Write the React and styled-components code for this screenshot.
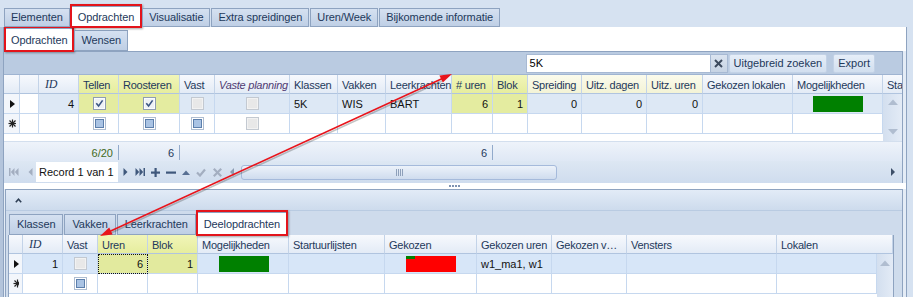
import React from 'react';
import styled, { createGlobalStyle, css } from 'styled-components';

const GlobalStyle = createGlobalStyle`
  html, body { margin: 0; padding: 0; background: #d6e2f1; }
  body { font-family: "Liberation Sans", Arial, sans-serif; font-size: 11px; }
  * { box-sizing: border-box; }
`;

const Y = '#e4eca0';
const LOW_Y = '#e2ea9e';

const headBg = {
  n: 'linear-gradient(#f7f9fd, #e3ebf6)',
  y: 'linear-gradient(#f1f5b8, #e6ed9e)',
  p: 'linear-gradient(#fbfbec, #f3f3d6)',
};

const Frame = styled.div`
  position: relative;
  width: 913px;
  height: 297px;
  overflow: hidden;
  background: #d6e2f1;
  display: flex;
  flex-direction: column;
  color: #1e395b;
`;

const TabStrip = styled.div`
  display: flex;
  align-items: flex-end;
  flex-shrink: 0;
  height: ${(p) => p.$h}px;
  padding-left: ${(p) => p.$pl}px;
  background: ${(p) => p.$bg};
  position: relative;
  z-index: 3;
  margin-bottom: -1px;
`;

const Tab = styled.div`
  position: relative;
  height: ${(p) => (p.$active ? p.$h + 2 : p.$h)}px;
  padding: 0 ${(p) => p.$px}px 1px;
  margin-right: 1px;
  display: flex;
  align-items: center;
  border: 1px solid #8ea3c0;
  border-bottom: ${(p) => (p.$active ? 'none' : '1px solid #8ea3c0')};
  background: ${(p) => (p.$active ? '#fff' : 'linear-gradient(#d5e1f1, #bfcfe5)')};
  color: #1e395b;
  white-space: nowrap;
  letter-spacing: -0.1px;
  ${(p) =>
    p.$marked &&
    css`
      &::after {
        content: '';
        position: absolute;
        top: -3px;
        left: -2px;
        right: -2px;
        bottom: -1px;
        border: 2px solid #e3141b;
        box-shadow: 1px 1px 2px rgba(0, 0, 0, 0.35);
        pointer-events: none;
      }
    `}
`;

const TabBody = styled.div`
  flex: 1;
  min-height: 0;
  margin: 0 6px 0 3px;
  border: 1px solid #8ea3c0;
  border-bottom: none;
  background: #e4ecf6;
  display: flex;
  flex-direction: column;
  box-shadow: -3px 0 0 #b3c4db;
`;

const SubTabStrip = styled(TabStrip)`
  margin-bottom: 0;
  z-index: 2;
`;

const GridPanel = styled.div`
  margin-right: 3px;
  border-top: 1px solid #8ea3c0;
  border-right: 1px solid #8ea3c0;
  display: flex;
  flex-direction: column;
  background: #fff;
  flex-shrink: 0;
`;

const Toolbar = styled.div`
  height: 23px;
  background: #bacbe1;
  border-bottom: 1px solid #9fb4d1;
  display: flex;
  align-items: center;
  justify-content: flex-end;
  padding-right: 27px;
`;

const SearchInput = styled.div`
  width: 185px;
  height: 19px;
  background: #fff;
  border: 1px solid #a7b9d3;
  color: #000;
  display: flex;
  align-items: center;
  padding-left: 3px;
`;

const ClearButton = styled.div`
  width: 17px;
  height: 19px;
  background: linear-gradient(#dbe4f0, #c6d3e4);
  border: 1px solid #a7b9d3;
  border-left: none;
  display: flex;
  align-items: center;
  justify-content: center;
`;

const ToolButton = styled.div`
  height: 19px;
  margin-left: ${(p) => p.$ml}px;
  padding: 0 4px;
  border: 1px solid #c3d2e6;
  border-radius: 2px;
  background: linear-gradient(#e6eef8, #d2dfef);
  display: flex;
  align-items: center;
  color: #1e395b;
  white-space: nowrap;
`;

const HeadRow = styled.div`
  display: flex;
  height: ${(p) => p.$h}px;
  flex-shrink: 0;
  overflow: hidden;
  width: ${(p) => p.$w}px;
`;

const HeadCell = styled.div`
  width: ${(p) => p.$w}px;
  flex-shrink: 0;
  height: 100%;
  border-right: 1px solid #c3d3e8;
  border-bottom: 1px solid #b0c4df;
  background: ${(p) => headBg[p.$hl || 'n']};
  padding: 1px 0 0 4px;
  display: flex;
  align-items: center;
  color: ${(p) => (p.$purple ? '#4f3a72' : '#1e395b')};
  font-style: ${(p) => (p.$italic ? 'italic' : 'normal')};
  letter-spacing: -0.25px;
  white-space: nowrap;
  overflow: hidden;
`;

const SerifItalic = styled.span`
  font-family: "Liberation Serif", "Times New Roman", serif;
  font-style: italic;
  font-size: 12px;
  padding-left: 2px;
`;

const BodyArea = styled.div`
  display: flex;
  height: ${(p) => p.$h}px;
  flex-shrink: 0;
`;

const Rows = styled.div`
  width: ${(p) => p.$w}px;
  background: #fff;
  display: flex;
  flex-direction: column;
`;

const Row = styled.div`
  display: flex;
  height: 20px;
  flex-shrink: 0;
`;

const Cell = styled.div`
  width: ${(p) => p.$w}px;
  flex-shrink: 0;
  height: 100%;
  border-right: 1px solid #c6d8ef;
  border-bottom: 1px solid #c6d8ef;
  background: ${(p) => p.$bg};
  display: flex;
  align-items: center;
  justify-content: ${(p) => p.$justify || 'flex-start'};
  padding: 0 ${(p) => (p.$justify === 'flex-end' ? 4 : 3)}px 0 4px;
  color: #111;
  white-space: nowrap;
  overflow: hidden;
  ${(p) =>
    p.$focus &&
    css`
      outline: 1px dotted #111;
      outline-offset: -1px;
    `}
`;

const VScroll = styled.div`
  width: ${(p) => p.$w}px;
  background: linear-gradient(90deg, #d3dfef, #e3ebf6);
  display: flex;
  flex-direction: column;
  align-items: center;
  justify-content: space-between;
  padding: ${(p) => p.$pad};
`;

const SummaryRow = styled.div`
  display: flex;
  height: 20px;
  background: linear-gradient(#eef3fa, #dfe8f5);
  border-top: 1px solid #d3dfee;
`;

const SumCell = styled.div`
  width: ${(p) => p.$w}px;
  flex-shrink: 0;
  display: flex;
  align-items: center;
  justify-content: flex-end;
  padding-right: 5px;
  color: ${(p) => p.$color || '#1e395b'};
  ${(p) =>
    p.$sep &&
    css`
      border-right: 1px solid #92aacb;
      margin: 3px 0 1px;
    `}
`;

const NavBar = styled.div`
  display: flex;
  height: 22px;
  background: linear-gradient(#dde7f3, #cfdcee);
  align-items: center;
`;

const NavGroup = styled.div`
  width: 221px;
  display: flex;
  align-items: center;
  height: 100%;
  flex-shrink: 0;
`;

const NavIconBox = styled.div`
  width: ${(p) => p.$w}px;
  height: 100%;
  display: flex;
  align-items: center;
  justify-content: center;
  flex-shrink: 0;
`;

const RecordBox = styled.div`
  width: 82px;
  height: 20px;
  background: #fff;
  color: #111;
  display: flex;
  align-items: center;
  padding-left: 3px;
  flex-shrink: 0;
  white-space: nowrap;
`;

const HScroll = styled.div`
  flex: 1;
  display: flex;
  align-items: center;
  height: 100%;
  padding: 0 7px 0 5px;
`;

const Thumb = styled.div`
  width: 316px;
  height: 15px;
  margin-left: 7px;
  border: 1px solid #a5badb;
  border-radius: 3px;
  background: linear-gradient(#ecf2fa, #cfdcee);
  display: flex;
  align-items: center;
  justify-content: center;
`;

const Spacer = styled.div`
  flex: 1;
`;

const Splitter = styled.div`
  height: 6px;
  background: #fff;
  display: flex;
  align-items: center;
  justify-content: center;
  flex-shrink: 0;
`;

const LowerPanel = styled.div`
  flex: 1;
  margin: 0 3px 0 1px;
  border: 1px solid #8ea3c0;
  border-bottom: none;
  background: #cfdcec;
  display: flex;
  flex-direction: column;
`;

const LowerHead = styled.div`
  height: 21px;
  background: linear-gradient(#e2ebf7, #cddbed);
  border-bottom: 1px solid #b9cbe2;
  display: flex;
  align-items: center;
  padding-left: 9px;
  flex-shrink: 0;
`;

const LowerGrid = styled.div`
  margin-left: 2px;
  width: 886px;
  border-left: 1px solid #8ea3c0;
  border-right: 1px solid #8ea3c0;
  border-top: 1px solid #8ea3c0;
  background: #fff;
  display: flex;
  flex-direction: column;
  flex: 1;
`;

const Overlay = styled.svg`
  position: absolute;
  left: 0;
  top: 0;
  pointer-events: none;
  z-index: 10;
`;

/* ---------- drawings ---------- */

function CheckBox({ kind }) {
  if (kind === 'on')
    return (
      <svg width="13" height="13">
        <rect x="0.5" y="0.5" width="12" height="12" fill="#eef1f5" stroke="#8f9db2" />
        <rect x="1.5" y="1.5" width="10" height="10" fill="none" stroke="#fbfcfd" />
        <path d="M3.3 6.3 L5.6 9 L9.6 3.4" fill="none" stroke="#3a5683" strokeWidth="1.6" />
      </svg>
    );
  if (kind === 'new')
    return (
      <svg width="13" height="13">
        <rect x="0.5" y="0.5" width="12" height="12" fill="#fff" stroke="#aebdd1" />
        <rect x="2.5" y="2.5" width="8" height="8" fill="#a9c3e4" stroke="#5c7fac" />
      </svg>
    );
  return (
    <svg width="13" height="13">
      <rect x="0.5" y="0.5" width="12" height="12" fill="#f2f2f2" stroke="#c3c9d1" />
      <rect x="2" y="2" width="9" height="9" fill="#e8e8e8" />
    </svg>
  );
}

function RowMark({ kind }) {
  if (kind === 'cur')
    return (
      <svg width="5" height="8">
        <polygon points="0,0 5,4 0,8" fill="#111" />
      </svg>
    );
  return (
    <svg width="9" height="9" stroke="#222" strokeWidth="1.2">
      <line x1="4.5" y1="0.5" x2="4.5" y2="8.5" />
      <line x1="0.5" y1="4.5" x2="8.5" y2="4.5" />
      <line x1="1.5" y1="1.5" x2="7.5" y2="7.5" />
      <line x1="7.5" y1="1.5" x2="1.5" y2="7.5" />
    </svg>
  );
}

function Bar({ w = 50, h = 16 }) {
  return (
    <svg width={w} height={h}>
      <rect width={w} height={h} fill="#008000" />
    </svg>
  );
}

function MixedBar() {
  return (
    <svg width="50" height="16">
      <rect width="50" height="16" fill="#ff0000" />
      <rect width="9" height="3" fill="#008000" />
    </svg>
  );
}

function NavIcon({ type }) {
  const gray = '#a3aec0';
  const dark = '#3f587c';
  switch (type) {
    case 'first':
      return (
        <svg width="10" height="8" fill={gray}>
          <rect x="0" y="0" width="1.5" height="8" />
          <polygon points="5.5,0 1.8,4 5.5,8" />
          <polygon points="9.5,0 5.8,4 9.5,8" />
        </svg>
      );
    case 'prev':
      return (
        <svg width="5" height="8" fill={gray}>
          <polygon points="4.5,0 0.5,4 4.5,8" />
        </svg>
      );
    case 'next':
      return (
        <svg width="5" height="8" fill={dark}>
          <polygon points="0.5,0 4.5,4 0.5,8" />
        </svg>
      );
    case 'last':
      return (
        <svg width="10" height="8" fill={dark}>
          <polygon points="0.5,0 4.2,4 0.5,8" />
          <polygon points="4.5,0 8.2,4 4.5,8" />
          <rect x="8.5" y="0" width="1.5" height="8" />
        </svg>
      );
    case 'plus':
      return (
        <svg width="9" height="9" fill={dark}>
          <rect x="3.5" y="0" width="2.2" height="9" />
          <rect x="0" y="3.5" width="9" height="2.2" />
        </svg>
      );
    case 'minus':
      return (
        <svg width="10" height="9" fill={dark}>
          <rect x="0" y="3.5" width="10" height="2.2" />
        </svg>
      );
    case 'up':
      return (
        <svg width="8" height="5" fill="#576f93">
          <polygon points="0,5 4,0.5 8,5" />
        </svg>
      );
    case 'check':
      return (
        <svg width="10" height="9">
          <path d="M1 4.5 L4 7.5 L9 1.5" fill="none" stroke={gray} strokeWidth="2.2" />
        </svg>
      );
    case 'cancel':
      return (
        <svg width="9" height="9" stroke={gray} strokeWidth="2.2">
          <line x1="0.8" y1="0.8" x2="8.2" y2="8.2" />
          <line x1="8.2" y1="0.8" x2="0.8" y2="8.2" />
        </svg>
      );
    case 'sleft':
      return (
        <svg width="4" height="8" fill="#8c9bb1">
          <polygon points="4,0 0,4 4,8" />
        </svg>
      );
    case 'sright':
      return (
        <svg width="4" height="8" fill="#3d4f68">
          <polygon points="0,0 4,4 0,8" />
        </svg>
      );
    default:
      return null;
  }
}

function ScrollArrow({ dir }) {
  return (
    <svg width="10" height="6" fill="#b0bdd0">
      {dir === 'up' ? <polygon points="0,6 5,0.5 10,6" /> : <polygon points="0,0 5,5.5 10,0" />}
    </svg>
  );
}

function Grip() {
  return (
    <svg width="7" height="7" stroke="#8ea0ba" strokeWidth="1">
      {[0.5, 2.5, 4.5, 6.5].map((x) => (
        <line key={x} x1={x} y1="0" x2={x} y2="7" />
      ))}
    </svg>
  );
}

function Dots() {
  return (
    <svg width="12" height="2" fill="#7f93b2">
      {[0, 3, 6, 9].map((x) => (
        <rect key={x} x={x} y="0" width="2" height="2" />
      ))}
    </svg>
  );
}

function Caret() {
  return (
    <svg width="7" height="5">
      <path d="M0.8 4.2 L3.5 1.2 L6.2 4.2" fill="none" stroke="#2f3f55" strokeWidth="1.6" />
    </svg>
  );
}

function ClearX() {
  return (
    <svg width="9" height="9" stroke="#3c4a5e" strokeWidth="2">
      <line x1="1" y1="1" x2="8" y2="8" />
      <line x1="8" y1="1" x2="1" y2="8" />
    </svg>
  );
}

/* ---------- data ---------- */

const upperCols = [
  { w: 16, label: '' },
  { w: 19, label: '' },
  { w: 40, label: 'ID', serif: true },
  { w: 40, label: 'Tellen', hl: 'y' },
  { w: 61, label: 'Roosteren', hl: 'y' },
  { w: 35, label: 'Vast' },
  { w: 75, label: 'Vaste planning', italic: true, purple: true },
  { w: 48, label: 'Klassen' },
  { w: 48, label: 'Vakken' },
  { w: 66, label: 'Leerkrachten' },
  { w: 41, label: '# uren', hl: 'y' },
  { w: 35, label: 'Blok', hl: 'y' },
  { w: 54, label: 'Spreiding', hl: 'p' },
  { w: 65, label: 'Uitz. dagen', hl: 'p' },
  { w: 56, label: 'Uitz. uren', hl: 'p' },
  { w: 90, label: 'Gekozen lokalen' },
  { w: 90, label: 'Mogelijkheden' },
  { w: 60, label: 'Startuurlijsten' },
];

const R = 'flex-end';
const C = 'center';

const upperRows = [
  {
    bg: '#dde8f5',
    cells: [
      { ind: 'cur', bg: '#f3f6fb' },
      { bg: '#fff' },
      { t: '4', j: R },
      { chk: 'on', bg: Y, j: C },
      { chk: 'on', bg: Y, j: C },
      { chk: 'off', j: C },
      { chk: 'off', j: C },
      { t: '5K' },
      { t: 'WIS' },
      { t: 'BART' },
      { t: '6', j: R, bg: Y },
      { t: '1', j: R, bg: Y },
      { t: '0', j: R },
      { t: '0', j: R },
      { t: '0', j: R },
      {},
      { bar: true, j: C },
    ],
  },
  {
    bg: '#fff',
    cells: [
      { ind: 'new', bg: '#f3f6fb' },
      {},
      {},
      { chk: 'new', j: C },
      { chk: 'new', j: C },
      { chk: 'new', j: C },
      { chk: 'off', j: C },
      {},
      {},
      {},
      {},
      {},
      {},
      {},
      {},
      {},
      {},
    ],
  },
];

const lowerCols = [
  { w: 14, label: '' },
  { w: 40, label: 'ID', serif: true },
  { w: 35, label: 'Vast' },
  { w: 50, label: 'Uren', hl: 'y' },
  { w: 50, label: 'Blok', hl: 'y' },
  { w: 91, label: 'Mogelijkheden' },
  { w: 96, label: 'Startuurlijsten' },
  { w: 92, label: 'Gekozen' },
  { w: 75, label: 'Gekozen uren' },
  { w: 75, label: 'Gekozen v…' },
  { w: 150, label: 'Vensters' },
  { w: 116, label: 'Lokalen' },
];

const lowerRows = [
  {
    bg: '#d7e6f8',
    cells: [
      { ind: 'cur', bg: '#f3f6fb' },
      { t: '1', j: R },
      { chk: 'off', j: C },
      { t: '6', j: R, bg: LOW_Y, focus: true },
      { t: '1', j: R, bg: LOW_Y },
      { bar: true, j: C },
      {},
      { mixed: true, j: C },
      { t: 'w1_ma1,  w1' },
      {},
      {},
      {},
    ],
  },
  {
    bg: '#fff',
    cells: [
      { ind: 'new', bg: '#f3f6fb' },
      {},
      { chk: 'new', j: C },
      {},
      {},
      {},
      {},
      {},
      {},
      {},
      {},
      {},
    ],
  },
];

function GridHeader({ cols, h, w }) {
  return (
    <HeadRow $h={h} $w={w}>
      {cols.map((c, i) => (
        <HeadCell key={i} $w={c.w} $hl={c.hl} $italic={c.italic} $purple={c.purple}>
          {c.serif ? <SerifItalic>{c.label}</SerifItalic> : c.label}
        </HeadCell>
      ))}
    </HeadRow>
  );
}

function GridRow({ cols, row, lastW }) {
  return (
    <Row>
      {row.cells.map((c, i) => (
        <Cell
          key={i}
          $w={i === row.cells.length - 1 && lastW ? lastW : cols[i].w}
          $bg={c.bg || row.bg}
          $justify={c.ind ? C : c.j}
          $focus={c.focus}
        >
          {c.ind && <RowMark kind={c.ind} />}
          {c.t}
          {c.chk && <CheckBox kind={c.chk} />}
          {c.bar && <Bar />}
          {c.mixed && <MixedBar />}
        </Cell>
      ))}
    </Row>
  );
}

const topTabs = ['Elementen', 'Opdrachten', 'Visualisatie', 'Extra spreidingen', 'Uren/Week', 'Bijkomende informatie'];
const lowerTabs = ['Klassen', 'Vakken', 'Leerkrachten', 'Deelopdrachten'];

export default function App() {
  return (
    <>
      <GlobalStyle />
      <Frame>
        <TabStrip $h={27} $pl={4} $bg="#d6e2f1">
          {topTabs.map((t) => (
            <Tab key={t} $h={19} $px={6} $active={t === 'Opdrachten'} $marked={t === 'Opdrachten'}>
              {t}
            </Tab>
          ))}
        </TabStrip>
        <TabBody>
          <SubTabStrip $h={24} $pl={1} $bg="#fff">
            <Tab $h={21} $px={5} $active $marked>
              Opdrachten
            </Tab>
            <Tab $h={21} $px={6}>
              Wensen
            </Tab>
          </SubTabStrip>
          <GridPanel>
            <Toolbar>
              <SearchInput>5K</SearchInput>
              <ClearButton>
                <ClearX />
              </ClearButton>
              <ToolButton $ml={1}>Uitgebreid zoeken</ToolButton>
              <ToolButton $ml={6}>Export</ToolButton>
            </Toolbar>
            <GridHeader cols={upperCols} h={19} w={898} />
            <BodyArea $h={47}>
              <Rows $w={879}>
                {upperRows.map((r, i) => (
                  <GridRow key={i} cols={upperCols} row={r} />
                ))}
              </Rows>
              <VScroll $w={19} $pad="5px 0 6px">
                <ScrollArrow dir="up" />
                <ScrollArrow dir="down" />
              </VScroll>
            </BodyArea>
            <SummaryRow>
              <SumCell $w={75} />
              <SumCell $w={40} $sep $color="#3f6a22">
                6/20
              </SumCell>
              <SumCell $w={61} $sep>
                6
              </SumCell>
              <SumCell $w={272} />
              <SumCell $w={41} $sep>
                6
              </SumCell>
            </SummaryRow>
            <NavBar>
              <NavGroup>
                <NavIconBox $w={20}>
                  <NavIcon type="first" />
                </NavIconBox>
                <NavIconBox $w={12}>
                  <NavIcon type="prev" />
                </NavIconBox>
                <RecordBox>Record 1 van 1</RecordBox>
                <NavIconBox $w={14}>
                  <NavIcon type="next" />
                </NavIconBox>
                <NavIconBox $w={16}>
                  <NavIcon type="last" />
                </NavIconBox>
                <NavIconBox $w={14}>
                  <NavIcon type="plus" />
                </NavIconBox>
                <NavIconBox $w={17}>
                  <NavIcon type="minus" />
                </NavIconBox>
                <NavIconBox $w={14}>
                  <NavIcon type="up" />
                </NavIconBox>
                <NavIconBox $w={16}>
                  <NavIcon type="check" />
                </NavIconBox>
                <NavIconBox $w={16}>
                  <NavIcon type="cancel" />
                </NavIconBox>
              </NavGroup>
              <HScroll>
                <NavIcon type="sleft" />
                <Thumb>
                  <Grip />
                </Thumb>
                <Spacer />
                <NavIcon type="sright" />
              </HScroll>
            </NavBar>
          </GridPanel>
          <Splitter>
            <Dots />
          </Splitter>
          <LowerPanel>
            <LowerHead>
              <Caret />
            </LowerHead>
            <TabStrip $h={24} $pl={3} $bg="#cedbec">
              {lowerTabs.map((t) => (
                <Tab
                  key={t}
                  $h={21}
                  $px={t === 'Deelopdrachten' ? 6 : 7}
                  $active={t === 'Deelopdrachten'}
                  $marked={t === 'Deelopdrachten'}
                >
                  {t}
                </Tab>
              ))}
            </TabStrip>
            <LowerGrid>
              <GridHeader cols={lowerCols} h={19} w={884} />
              <BodyArea $h={60}>
                <Rows $w={868}>
                  {lowerRows.map((r, i) => (
                    <GridRow key={i} cols={lowerCols} row={r} lastW={100} />
                  ))}
                </Rows>
                <VScroll $w={16} $pad="6px 0">
                  <ScrollArrow dir="up" />
                  <span />
                </VScroll>
              </BodyArea>
            </LowerGrid>
          </LowerPanel>
        </TabBody>
        <Overlay width="913" height="297" viewBox="0 0 913 297">
          <line x1="442" y1="81" x2="111" y2="233" stroke="rgba(60,60,60,0.3)" strokeWidth="1.5" />
          <line x1="444" y1="77.7" x2="108" y2="232.3" stroke="#e8141b" strokeWidth="1.6" />
          <polygon points="452,74 442.8,82.6 439.4,75.4" fill="#e8141b" />
          <polygon points="100,236 112.6,234.6 109.2,227.4" fill="#e8141b" />
        </Overlay>
      </Frame>
    </>
  );
}
